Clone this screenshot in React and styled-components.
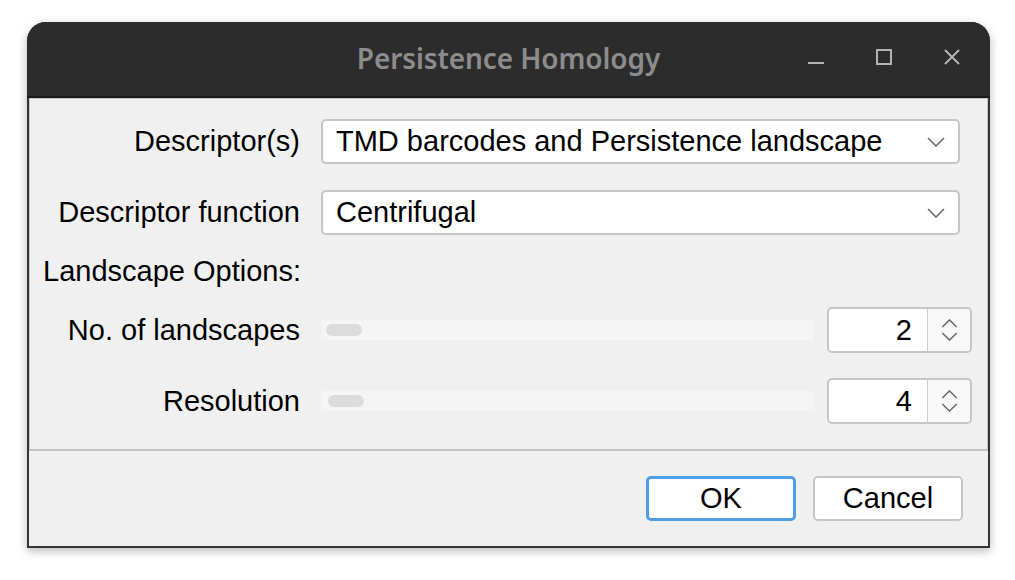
import React from 'react';
import styled, { createGlobalStyle } from 'styled-components';

const GlobalStyle = createGlobalStyle`
  html, body {
    margin: 0;
    padding: 0;
    background: #ffffff;
  }
  body {
    font-family: "Liberation Sans", Arial, sans-serif;
  }
`;

const Page = styled.div`
  width: 1015px;
  height: 580px;
  padding: 22px 25px 0 27px;
  box-sizing: border-box;
`;

const Window = styled.div`
  display: flex;
  flex-direction: column;
  width: 963px;
  height: 526px;
  box-sizing: border-box;
  padding: 0 2px 2px 2px;
  background: #353535;
  border-radius: 19px 19px 0 0;
  box-shadow: 0 3px 10px rgba(0, 0, 0, 0.28);
  overflow: hidden;
`;

const TitleBar = styled.div`
  display: grid;
  grid-template-columns: 1fr auto 1fr;
  align-items: center;
  height: 74px;
  margin: 0 -2px;
  background: #2c2c2c;
  border-bottom: 2px solid #1b1b1b;
`;

const Title = styled.div`
  grid-column: 2;
  padding-bottom: 2px;
  font-family: "Noto Sans", "Open Sans", sans-serif;
  font-size: 28px;
  font-weight: 600;
  letter-spacing: -0.1px;
  color: #8c8c8c;
`;

const Controls = styled.div`
  grid-column: 3;
  display: flex;
  justify-content: flex-end;
  padding-right: 4px;
  padding-bottom: 4px;
`;

const ControlButton = styled.div`
  display: flex;
  align-items: center;
  justify-content: center;
  width: 68px;
  height: 30px;
  color: #b4b4b4;
`;

const Body = styled.div`
  display: flex;
  flex-direction: column;
  flex: 1;
  background: #f0f0f0;
`;

const Frame = styled.div`
  display: flex;
  flex-direction: column;
  height: 353px;
  box-sizing: border-box;
  padding: 20px 15px 0 13px;
  border: 2px solid #c3c3c3;
  border-top-width: 1px;
  border-right-width: 1px;
  border-left-width: 1px;
`;

const Row = styled.div`
  display: flex;
  align-items: center;
  margin-top: ${props => props.$gap || 0}px;
  height: ${props => props.$height || 45}px;
`;

const Label = styled.div`
  flex: 0 0 257px;
  text-align: right;
  font-size: 29px;
  color: #000;
  padding-right: 21px;
  box-sizing: content-box;
`;

const SectionLabel = styled.div`
  margin-top: 20px;
  height: 32px;
  line-height: 32px;
  font-size: 29px;
  color: #000;
`;

const Combo = styled.div`
  display: flex;
  align-items: center;
  flex: 1;
  height: 45px;
  margin-right: 12px;
  box-sizing: border-box;
  padding: 0 13px 0 13px;
  background: #fff;
  border: 2px solid #c6c6c6;
  border-radius: 5px;
  font-size: 29px;
  color: #000;
`;

const ComboText = styled.span`
  flex: 1;
`;

const SliderTrack = styled.div`
  flex: 1;
  height: 20px;
  display: flex;
  align-items: center;
  padding-left: ${props => props.$offset}px;
  background: #f5f5f5;
`;

const SliderHandle = styled.div`
  width: 36px;
  height: 12px;
  border-radius: 6px;
  background: #dcdcdc;
`;

const SpinBox = styled.div`
  display: flex;
  width: 145px;
  height: 46px;
  margin-left: 13px;
  box-sizing: border-box;
  background: #fff;
  border: 2px solid #c6c6c6;
  border-radius: 5px;
  overflow: hidden;
`;

const SpinValue = styled.div`
  flex: 1;
  display: flex;
  align-items: center;
  justify-content: flex-end;
  padding-right: 15px;
  font-size: 29px;
  color: #000;
`;

const SpinArrows = styled.div`
  display: flex;
  flex-direction: column;
  align-items: center;
  justify-content: center;
  gap: 4px;
  width: 42px;
  background: #f8f8f8;
  border-left: 1px solid #cbcbcb;
`;

const Footer = styled.div`
  display: flex;
  justify-content: flex-end;
  gap: 17px;
  padding: 25px 25px 0 0;
`;

const Button = styled.div`
  display: flex;
  align-items: center;
  justify-content: center;
  width: 150px;
  height: 45px;
  box-sizing: border-box;
  background: #fff;
  border: ${props => (props.$primary ? '3px solid #4f9de6' : '2px solid #c6c6c6')};
  border-radius: 5px;
  font-size: 29px;
  color: #000;
`;

const Chevron = ({ up, width = 18, height = 10 }) => (
  <svg width={width} height={height} viewBox="0 0 18 10">
    <polyline
      points={up ? '1,9 9,1 17,9' : '1,1 9,9 17,1'}
      fill="none"
      stroke="#6a6a6a"
      strokeWidth="1.6"
    />
  </svg>
);

const Minimize = () => (
  <svg width="18" height="18" viewBox="0 0 18 18">
    <line x1="1" y1="15" x2="17" y2="15" stroke="currentColor" strokeWidth="2" />
  </svg>
);

const Maximize = () => (
  <svg width="18" height="18" viewBox="0 0 18 18">
    <rect x="2" y="2" width="14" height="14" fill="none" stroke="currentColor" strokeWidth="2" />
  </svg>
);

const Close = () => (
  <svg width="18" height="18" viewBox="0 0 18 18">
    <path d="M2 2 L16 16 M16 2 L2 16" stroke="currentColor" strokeWidth="2" />
  </svg>
);

const ComboBox = ({ value }) => (
  <Combo>
    <ComboText>{value}</ComboText>
    <Chevron />
  </Combo>
);

const SliderSpin = ({ label, value, offset, gap }) => (
  <Row $gap={gap} $height={46}>
    <Label>{label}</Label>
    <SliderTrack $offset={offset}>
      <SliderHandle />
    </SliderTrack>
    <SpinBox>
      <SpinValue>{value}</SpinValue>
      <SpinArrows>
        <Chevron up width={17} height={9} />
        <Chevron width={17} height={9} />
      </SpinArrows>
    </SpinBox>
  </Row>
);

export default function App() {
  return (
    <Page>
      <GlobalStyle />
      <Window>
        <TitleBar>
          <Title>Persistence Homology</Title>
          <Controls>
            <ControlButton><Minimize /></ControlButton>
            <ControlButton><Maximize /></ControlButton>
            <ControlButton><Close /></ControlButton>
          </Controls>
        </TitleBar>
        <Body>
          <Frame>
            <Row>
              <Label>Descriptor(s)</Label>
              <ComboBox value="TMD barcodes and Persistence landscape" />
            </Row>
            <Row $gap={26}>
              <Label>Descriptor function</Label>
              <ComboBox value="Centrifugal" />
            </Row>
            <SectionLabel>Landscape Options:</SectionLabel>
            <SliderSpin label="No. of landscapes" value="2" offset={5} gap={20} />
            <SliderSpin label="Resolution" value="4" offset={7} gap={25} />
          </Frame>
          <Footer>
            <Button $primary>OK</Button>
            <Button>Cancel</Button>
          </Footer>
        </Body>
      </Window>
    </Page>
  );
}
